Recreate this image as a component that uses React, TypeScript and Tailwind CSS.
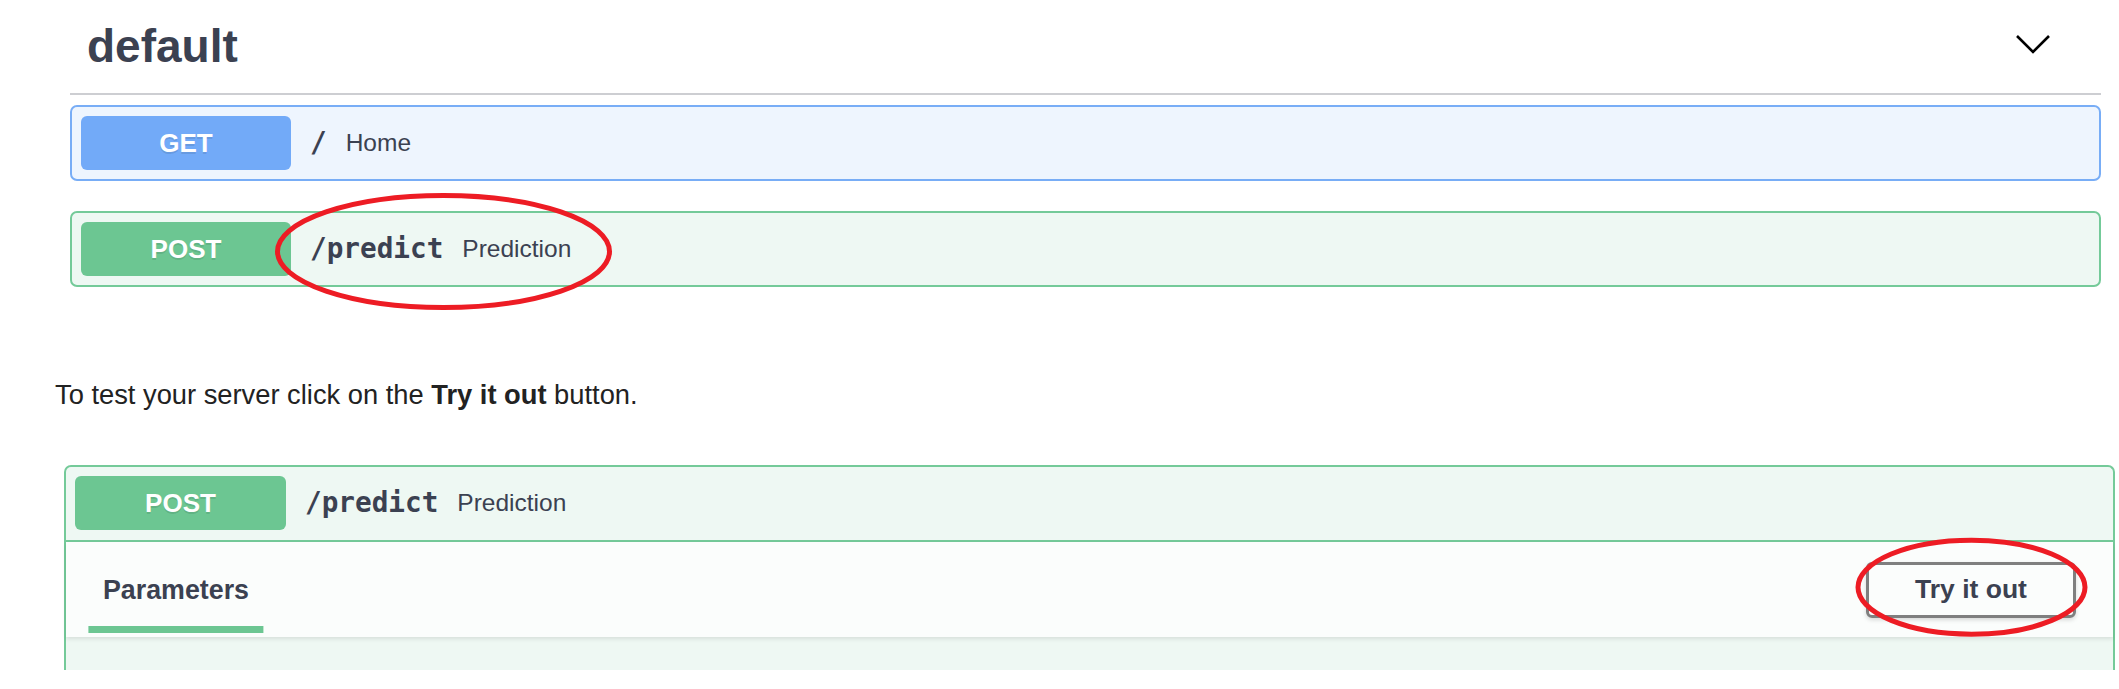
import React from "react";

interface OpProps {
  method: "GET" | "POST";
  path: string;
  summary: string;
  badgeWidth?: string;
}

const sans = "font-['Liberation_Sans',Arial,sans-serif]";
const mono = "font-['DejaVu_Sans_Mono','Liberation_Mono',monospace]";

/**
 * Method badge (GET / POST)
 */
function MethodBadge({ method, width }: { method: "GET" | "POST"; width: string }) {
  const color = method === "GET" ? "bg-[#72aaf8]" : "bg-[#6cc692]";
  return (
    <span
      className={`flex h-[54px] ${width} shrink-0 items-center justify-center rounded-[6px] ${color} text-[26px] font-bold text-white [text-shadow:0_2px_0_rgba(0,0,0,0.1)]`}
    >
      {method}
    </span>
  );
}

/**
 * Summary row: badge, path, description
 */
function OpSummary(props: OpProps) {
  return (
    <div className="flex items-center">
      <MethodBadge method={props.method} width={props.badgeWidth ?? "w-[210px]"} />
      <span
        className={`px-[19px] ${mono} text-[27.7px] font-bold leading-[32px] text-[#3b4151]`}
      >
        {props.path}
      </span>
      <span className="text-[24.5px] leading-[28px] text-[#3b4151]">
        {props.summary}
      </span>
    </div>
  );
}

function OpBlock(props: OpProps) {
  const look =
    props.method === "GET"
      ? "border-[#78adf6] bg-[#eef5fe]"
      : "border-[#74ca99] bg-[#eef8f3]";
  return (
    <div className={`rounded-[7px] border-2 p-[9px] ${look}`}>
      <OpSummary {...props} />
    </div>
  );
}

function Chevron() {
  return (
    <svg width="36" height="20" viewBox="0 0 36 20" className="mb-[4px]">
      <polyline
        points="2,2 18,18 34,2"
        fill="none"
        stroke="#000"
        strokeWidth="2.6"
      />
    </svg>
  );
}

export default function App() {
  return (
    <div className={`relative h-[689px] w-full overflow-hidden bg-white ${sans}`}>
      {/* tag section */}
      <section className="ml-[70px] w-[2031px]">
        <div className="flex items-center justify-between border-b-2 border-[#cdced2] pt-[20px] pb-[21px] pl-[17px] pr-[50px]">
          <h3 className="text-[46px] font-bold leading-[52px] text-[#3b4151]">
            default
          </h3>
          <Chevron />
        </div>
        <div className="mt-[10px] flex flex-col gap-[30px]">
          <OpBlock method="GET" path="/" summary="Home" />
          <OpBlock method="POST" path="/predict" summary="Prediction" />
        </div>
      </section>

      <p className="mt-[92px] ml-[55px] text-[27.3px] leading-[31px] text-[#222]">
        To test your server click on the <strong>Try it out</strong> button.
      </p>

      {/* expanded operation */}
      <div className="mt-[55px] ml-[64px] w-[2051px] rounded-t-[7px] border-x-2 border-t-2 border-[#74ca99] bg-[#eef8f3]">
        <div className="border-b-2 border-[#74ca99] px-[9px] pt-[9px] pb-[10px]">
          <OpSummary
            method="POST"
            path="/predict"
            summary="Prediction"
            badgeWidth="w-[211px]"
          />
        </div>
        <div className="flex h-[95px] items-center justify-between bg-[#fbfdfc] px-[37px] shadow-[0_2px_4px_rgba(0,0,0,0.1)]">
          <h4 className="relative text-[26.8px] font-bold leading-[30px] text-[#3b4151]">
            Parameters
            <span className="absolute top-[51px] left-1/2 h-[7.5px] w-[120%] -translate-x-1/2 bg-[#6cc692]" />
          </h4>
          <button className="flex h-[56px] w-[210px] items-center justify-center rounded-[6px] border-[3px] border-[#7f7f7f] text-[26.5px] font-bold text-[#3b4151] shadow-[0_2px_4px_rgba(0,0,0,0.15)]">
            Try it out
          </button>
        </div>
        <div className="h-[33px]" />
      </div>

      {/* annotations */}
      <svg
        className="pointer-events-none absolute top-0 left-0"
        width="2119"
        height="689"
      >
        <ellipse
          cx="443.5"
          cy="251.5"
          rx="166"
          ry="56"
          fill="none"
          stroke="#ed1c24"
          strokeWidth="5"
        />
        <ellipse
          cx="1971.5"
          cy="587.2"
          rx="113.5"
          ry="47"
          fill="none"
          stroke="#ed1c24"
          strokeWidth="5"
        />
      </svg>
    </div>
  );
}
